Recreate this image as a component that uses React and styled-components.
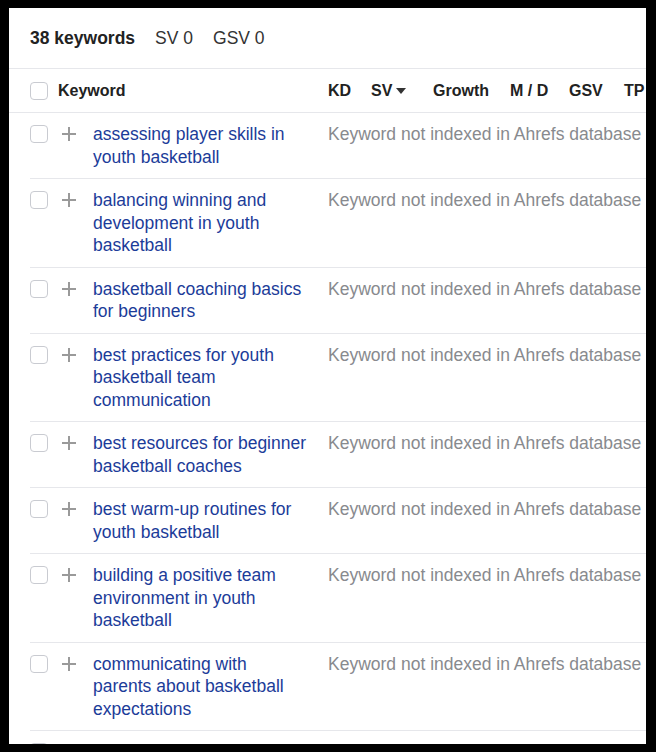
import React from 'react';
import styled, { createGlobalStyle } from 'styled-components';

const Global = createGlobalStyle`
  html, body {
    margin: 0;
    background: #000;
  }
  body {
    padding: 8px 10px 8px 9px;
    font-family: "Liberation Sans", Arial, sans-serif;
  }
`;

const Panel = styled.div`
  background: #fff;
  height: 736px;
  overflow: hidden;
`;

const Summary = styled.div`
  display: flex;
  align-items: center;
  gap: 20px;
  height: 60px;
  padding-left: 21px;
  border-bottom: 1px solid #e6e7eb;
  font-size: 17.5px;
  color: #333;
`;

const Count = styled.span`
  font-weight: bold;
  color: #222;
`;

const HeadRow = styled.div`
  display: flex;
  align-items: center;
  height: 43px;
  padding-left: 21px;
  border-bottom: 1px solid #e6e7eb;
  font-size: 16px;
  font-weight: bold;
  color: #222;
  white-space: nowrap;
`;

const Check = styled.span`
  flex: none;
  width: 16px;
  height: 16px;
  border: 1px solid #c9cbd1;
  border-radius: 4px;
  background: #fff;
`;

const HeadKeyword = styled.span`
  width: 270px;
  margin-left: 10px;
  flex: none;
`;

const Col = styled.span`
  flex: none;
  width: ${(p) => p.$w}px;
  display: flex;
  align-items: center;
  gap: 4px;
`;

const Row = styled.div`
  display: flex;
  align-items: flex-start;
  margin-left: 21px;
  padding: 10px 0;
  border-bottom: 1px solid #e6e7eb;
  font-size: 17.5px;
  line-height: 22.5px;
`;

const RowCheck = styled(Check)`
  margin-top: 2px;
`;

const Plus = styled.svg`
  flex: none;
  margin: 4px 0 0 14px;
`;

const Keyword = styled.a`
  flex: none;
  width: 215px;
  margin-left: 17px;
  color: #1c3c99;
  text-decoration: none;
`;

const Note = styled.span`
  margin-left: 20px;
  color: #888a8e;
  white-space: nowrap;
`;

const keywords = [
  'assessing player skills in youth basketball',
  'balancing winning and development in youth basketball',
  'basketball coaching basics for beginners',
  'best practices for youth basketball team communication',
  'best resources for beginner basketball coaches',
  'best warm-up routines for youth basketball',
  'building a positive team environment in youth basketball',
  'communicating with parents about basketball expectations',
  'creating a fun practice environment',
];

const App = () => {
  return (
    <>
      <Global />
      <Panel>
        <Summary>
          <Count>38 keywords</Count>
          <span>SV 0</span>
          <span>GSV 0</span>
        </Summary>
        <HeadRow>
          <Check />
          <HeadKeyword>Keyword</HeadKeyword>
          <Col $w={43}>KD</Col>
          <Col $w={62}>
            SV
            <svg width="10" height="6" viewBox="0 0 10 6">
              <path d="M0 0h10L5 6z" fill="#333" />
            </svg>
          </Col>
          <Col $w={77}>Growth</Col>
          <Col $w={59}>M / D</Col>
          <Col $w={55}>GSV</Col>
          <Col $w={30}>TP</Col>
        </HeadRow>
        {keywords.map((k) => (
          <Row key={k}>
            <RowCheck />
            <Plus width="14" height="14" viewBox="0 0 14 14">
              <path d="M7 0v14M0 7h14" stroke="#9a9a9a" strokeWidth="2" />
            </Plus>
            <Keyword href="#">{k}</Keyword>
            <Note>Keyword not indexed in Ahrefs database</Note>
          </Row>
        ))}
      </Panel>
    </>
  );
};

export default App;
